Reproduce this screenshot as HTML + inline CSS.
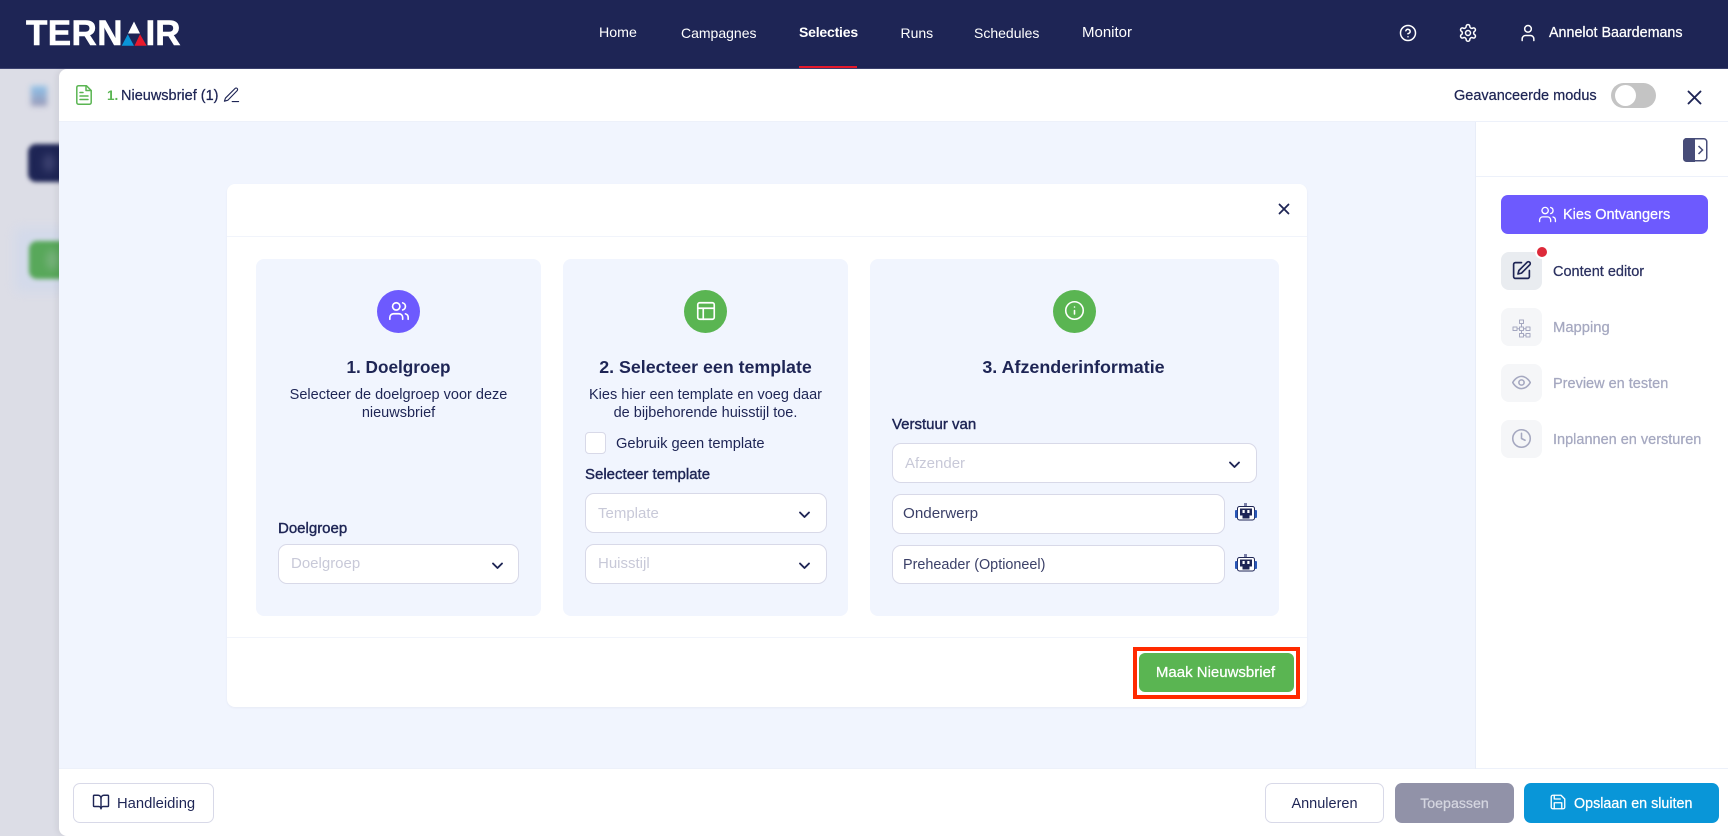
<!DOCTYPE html>
<html lang="nl"><head><meta charset="utf-8"><title>Ternair</title>
<style>
*{box-sizing:border-box}
html,body{margin:0;padding:0;width:1728px;height:836px;overflow:hidden;background:#dcdde6;font-family:"Liberation Sans",sans-serif;color:#1e2555}
div,span,svg{position:absolute}
.t{white-space:nowrap;line-height:20px;height:20px;font-size:15px}
.m{-webkit-text-stroke:.25px currentColor}
.l{-webkit-text-stroke:.4px currentColor}
.b{font-weight:bold}
.c{text-align:center}
.card{background:#f1f5fe;border-radius:8px;top:259px;height:357px}
.circ{width:43px;height:43px;border-radius:50%;top:290px}
.sel{background:#fff;border:1px solid #d8d9e8;border-radius:9px}
.ph{color:#c8c9d8;font-size:15px}
.ic{fill:none;stroke-linecap:round;stroke-linejoin:round}
.box{left:1501px;width:41px;height:38px;border-radius:8px;background:#f5f6f8}
.btn{top:783px;height:40px;border-radius:7px}
</style></head><body>
<!-- blurred background -->
<div style="left:31px;top:86px;width:16px;height:20px;background:linear-gradient(#8cc0e8,#9a9ab8);filter:blur(3px)"></div>
<div style="left:15px;top:228px;width:60px;height:64px;background:#c8d6f0;opacity:.45;filter:blur(6px)"></div>
<div style="left:28px;top:144px;width:50px;height:38px;background:#1e2555;border-radius:8px;filter:blur(2px)"></div>
<div style="left:29px;top:241px;width:50px;height:38px;background:#58a85a;border-radius:8px;filter:blur(2px)"></div>
<div style="left:43px;top:154px;width:12px;height:18px;background:#3c4170;border-radius:50%;filter:blur(4px)"></div>
<div style="left:46px;top:250px;width:13px;height:20px;background:#74b078;border-radius:50%;filter:blur(4px)"></div>

<!-- header -->
<div style="left:0;top:0;width:1728px;height:69px;background:#1e2555;border-bottom:1px solid #3d4370"></div>
<div class="t b" style="left:26px;top:14px;font-size:35px;line-height:40px;height:40px;color:#fff;-webkit-text-stroke:.6px #fff;letter-spacing:.4px">TERN</div>
<svg style="left:120px;top:20px" width="28" height="27" viewBox="120 20 28 27"><path d="M134 21.500L140 33.500H128Z" fill="#fff"/><path d="M127.800 34.300L121.700 45.700H134Z" fill="#0a95d8"/><path d="M140 34.300L134.500 45.700H146.700Z" fill="#e8192c"/></svg>
<div class="t b" style="left:145.500px;top:14px;font-size:35px;line-height:40px;height:40px;color:#fff;-webkit-text-stroke:.6px #fff">IR</div>

<div class="t" style="left:599px;top:23px;color:#fff;font-size:14.200px">Home</div>
<div class="t" style="left:681px;top:23px;color:#fff;font-size:14px">Campagnes</div>
<div class="t b" style="left:799px;top:22px;color:#fff;font-size:14px;letter-spacing:-.2px">Selecties</div>
<div class="t" style="left:900.500px;top:23px;color:#fff;font-size:14px">Runs</div>
<div class="t" style="left:974px;top:23px;color:#fff;font-size:14px">Schedules</div>
<div class="t" style="left:1082px;top:23px;color:#fff">Monitor</div>
<div style="left:799px;top:66px;width:58px;height:2px;background:#e8192c"></div>

<svg class="ic" style="left:1399px;top:24px" width="18" height="18" viewBox="0 0 24 24" stroke="#fff" stroke-width="2"><circle cx="12" cy="12" r="10"/><path d="M9.100 9a3 3 0 0 1 5.800 1c0 2-3 3-3 3"/><path d="M12 17h.01"/></svg>
<svg class="ic" style="left:1458px;top:23px" width="20" height="20" viewBox="0 0 24 24" stroke="#fff" stroke-width="1.800"><path d="M12.200 2h-.4a2 2 0 0 0-2 2v.2a2 2 0 0 1-1 1.700l-.4.3a2 2 0 0 1-2 0l-.2-.1a2 2 0 0 0-2.700.7l-.2.4a2 2 0 0 0 .7 2.700l.2.1a2 2 0 0 1 1 1.700v.5a2 2 0 0 1-1 1.700l-.2.1a2 2 0 0 0-.7 2.700l.2.4a2 2 0 0 0 2.700.7l.2-.1a2 2 0 0 1 2 0l.4.3a2 2 0 0 1 1 1.700v.2a2 2 0 0 0 2 2h.4a2 2 0 0 0 2-2v-.2a2 2 0 0 1 1-1.700l.4-.3a2 2 0 0 1 2 0l.2.1a2 2 0 0 0 2.700-.7l.2-.4a2 2 0 0 0-.7-2.700l-.2-.1a2 2 0 0 1-1-1.700v-.5a2 2 0 0 1 1-1.700l.2-.1a2 2 0 0 0 .7-2.700l-.2-.4a2 2 0 0 0-2.700-.7l-.2.1a2 2 0 0 1-2 0l-.4-.3a2 2 0 0 1-1-1.700V4a2 2 0 0 0-2-2z"/><circle cx="12" cy="12" r="3"/></svg>
<svg class="ic" style="left:1518px;top:23px" width="20" height="20" viewBox="0 0 24 24" stroke="#fff" stroke-width="1.800"><circle cx="12" cy="7" r="4"/><path d="M5 21v-2a4 4 0 0 1 4-4h6a4 4 0 0 1 4 4v2"/></svg>
<div class="t m" style="left:1549px;top:23px;color:#fff;font-size:14.300px">Annelot Baardemans</div>

<!-- modal -->
<div style="left:59px;top:69px;width:1669px;height:767px;background:#fff;border-radius:8px 0 0 8px;box-shadow:-3px 0 6px rgba(0,0,0,.05)"></div>
<div style="left:59px;top:122px;width:1417px;height:647px;background:#f1f5fe"></div>
<div style="left:59px;top:121px;width:1669px;height:1px;background:#edf1fa"></div>
<div style="left:59px;top:768px;width:1669px;height:1px;background:#edf1fa"></div>
<div style="left:1475px;top:122px;width:1px;height:647px;background:#e8edf8"></div>
<div style="left:1476px;top:176px;width:252px;height:1px;background:#edf1fa"></div>

<svg class="ic" style="left:76px;top:85px" width="16" height="20" viewBox="0 0 16 20" stroke="#5ab552" stroke-width="1.500"><path d="M10.500 .8H2.500A1.800 1.800 0 0 0 .8 2.500V17.500A1.800 1.800 0 0 0 2.500 19.200H13.500A1.800 1.800 0 0 0 15.200 17.500V5.500Z"/><path d="M10 1V5.500H15"/><path d="M4 7.500H7M4 11H12M4 14.500H12"/></svg>
<div class="t b" style="left:107px;top:86px;color:#5ab552;font-size:13.500px">1.</div>
<div class="t m" style="left:121px;top:86px;font-size:14.500px">Nieuwsbrief (1)</div>
<svg class="ic" style="left:223px;top:86px" width="17" height="17" viewBox="0 0 24 24" stroke="#1e2555" stroke-width="1.600"><path d="M13 22h9"/><path d="M17 3.500a2.100 2.100 0 0 1 3 3L7 20l-5 1.500L3.500 17z"/></svg>

<div class="t m" style="left:1454px;top:86px;font-size:14.500px">Geavanceerde modus</div>
<div style="left:1611px;top:83px;width:45px;height:25px;border-radius:13px;background:#c4c4c4"></div>
<div style="left:1615px;top:85px;width:21px;height:21px;border-radius:50%;background:#fff"></div>
<svg class="ic" style="left:1686px;top:89px" width="17" height="17" viewBox="0 0 17 17" stroke="#1e2555" stroke-width="1.900"><path d="M2.500 2.500l12 12M14.500 2.500l-12 12"/></svg>

<!-- right panel -->
<svg style="left:1683px;top:138px" width="25" height="24" viewBox="0 0 25 24"><rect x=".75" y=".75" width="23" height="22" rx="3" fill="#fff" stroke="#474c78" stroke-width="1.500"/><path d="M3.500 0H12V24H3.500A3.500 3.500 0 0 1 0 20.500V3.500A3.500 3.500 0 0 1 3.500 0Z" fill="#474c78"/><path d="M15.500 8l4 4-4 4" fill="none" stroke="#474c78" stroke-width="1.500"/></svg>
<div style="left:1501px;top:195px;width:207px;height:39px;border-radius:7px;background:#6d5afe"></div>
<svg class="ic" style="left:1538px;top:205px" width="19" height="19" viewBox="0 0 24 24" stroke="#fff" stroke-width="1.700"><path d="M16 21v-2a4 4 0 0 0-4-4H6a4 4 0 0 0-4 4v2"/><circle cx="9" cy="7" r="4"/><path d="M22 21v-2a4 4 0 0 0-3-3.870M16 3.130a4 4 0 0 1 0 7.750"/></svg>
<div class="t m" style="left:1563px;top:205px;color:#fff;font-size:14.500px">Kies Ontvangers</div>

<div class="box" style="top:252px;background:#e9ecf0"></div>
<svg class="ic" style="left:1511px;top:260px" width="21" height="21" viewBox="0 0 24 24" stroke="#1e2555" stroke-width="1.900"><path d="M12 3H5a2 2 0 0 0-2 2v14a2 2 0 0 0 2 2h14a2 2 0 0 0 2-2v-7"/><path d="M18.400 2.600a2.100 2.100 0 0 1 3 3L12 15l-4 1 1-4z"/></svg>
<div style="left:1535px;top:245px;width:14px;height:14px;border-radius:50%;background:#dd2a3a;border:2px solid #fff"></div>
<div class="t m" style="left:1553px;top:262px;color:#2b3160;font-size:14.500px">Content editor</div>

<div class="box" style="top:308px"></div>
<svg class="ic" style="left:1512px;top:319px" width="19" height="19" viewBox="0 0 19 19" stroke="#a5a8c0" stroke-width="1"><rect x="7.500" y="1" width="4" height="3.500"/><rect x="1" y="8" width="4" height="3.500"/><rect x="7.500" y="8" width="4" height="3.500"/><rect x="14" y="8" width="4" height="3.500"/><rect x="7.500" y="14.500" width="4" height="3.500"/><rect x="14" y="14.500" width="4" height="3.500"/><path d="M9.500 4.500V8M5 9.750h2.500M11.500 9.750H14M9.500 11.500v3M11.500 16.250H14"/></svg>
<div class="t m" style="left:1553px;top:318px;color:#a5a8c0;font-size:14.800px">Mapping</div>

<div class="box" style="top:364px"></div>
<svg class="ic" style="left:1511px;top:372px" width="21" height="21" viewBox="0 0 24 24" stroke="#a5a8c0" stroke-width="1.800"><path d="M2 12s3.500-7 10-7 10 7 10 7-3.500 7-10 7-10-7-10-7z"/><circle cx="12" cy="12" r="3"/></svg>
<div class="t m" style="left:1553px;top:374px;color:#a5a8c0;font-size:14.500px">Preview en testen</div>

<div class="box" style="top:420px"></div>
<svg class="ic" style="left:1511px;top:428px" width="21" height="21" viewBox="0 0 24 24" stroke="#a5a8c0" stroke-width="1.800"><circle cx="12" cy="12" r="10"/><path d="M12 6v6l4 2"/></svg>
<div class="t m" style="left:1553px;top:430px;color:#a5a8c0;font-size:14.500px">Inplannen en versturen</div>

<!-- dialog -->
<div style="left:227px;top:184px;width:1080px;height:523px;background:#fff;border-radius:8px;box-shadow:0 1px 2px rgba(30,37,85,.05)"></div>
<div style="left:227px;top:236px;width:1080px;height:1px;background:#f1f4fb"></div>
<div style="left:227px;top:637px;width:1080px;height:1px;background:#f1f4fb"></div>
<svg class="ic" style="left:1278px;top:203px" width="12" height="12" viewBox="0 0 12 12" stroke="#1e2555" stroke-width="1.800"><path d="M1.500 1.500l9 9M10.500 1.500l-9 9"/></svg>

<!-- card 1 -->
<div class="card" style="left:256px;width:285px"></div>
<div class="circ" style="left:377px;background:#6d5afe"></div>
<svg class="ic" style="left:388px;top:300px" width="22" height="22" viewBox="0 0 24 24" stroke="#fff" stroke-width="1.800"><path d="M16 21v-2a4 4 0 0 0-4-4H6a4 4 0 0 0-4 4v2"/><circle cx="9" cy="7" r="4"/><path d="M22 21v-2a4 4 0 0 0-3-3.870M16 3.130a4 4 0 0 1 0 7.750"/></svg>
<div class="t b c" style="left:256px;width:285px;top:357px;font-size:17.200px">1. Doelgroep</div>
<div class="t c" style="left:256px;width:285px;top:385px;font-size:14.500px">Selecteer de doelgroep voor deze</div>
<div class="t c" style="left:256px;width:285px;top:403px;font-size:14.500px">nieuwsbrief</div>
<div class="t l" style="left:278px;top:519px;font-size:15px">Doelgroep</div>
<div class="sel" style="left:278px;top:544px;width:241px;height:40px"></div>
<div class="t ph" style="left:291px;top:554px">Doelgroep</div>
<svg class="ic chev" style="left:491px;top:561px" width="13" height="10" viewBox="0 0 13 10" stroke="#1e2555" stroke-width="1.900"><path d="M2 2.500l4.500 4.500 4.500-4.500"/></svg>

<!-- card 2 -->
<div class="card" style="left:563px;width:285px"></div>
<div class="circ" style="left:684px;background:#5ab552"></div>
<svg class="ic" style="left:695px;top:300px" width="22" height="22" viewBox="0 0 24 24" stroke="#fff" stroke-width="1.800"><rect x="3" y="3" width="18" height="18" rx="2"/><path d="M3 9h18M9 9v12"/></svg>
<div class="t b c" style="left:563px;width:285px;top:357px;font-size:17.800px">2. Selecteer een template</div>
<div class="t c" style="left:563px;width:285px;top:385px;font-size:14.500px">Kies hier een template en voeg daar</div>
<div class="t c" style="left:563px;width:285px;top:403px;font-size:14.500px">de bijbehorende huisstijl toe.</div>
<div style="left:585px;top:432px;width:21px;height:22px;border:1px solid #d8d9e8;border-radius:4px;background:#fff"></div>
<div class="t" style="left:616px;top:434px;font-size:14.700px">Gebruik geen template</div>
<div class="t l" style="left:585px;top:465px;font-size:15px">Selecteer template</div>
<div class="sel" style="left:585px;top:493px;width:242px;height:40px"></div>
<div class="t ph" style="left:598px;top:504px">Template</div>
<svg class="ic chev" style="left:798px;top:510px" width="13" height="10" viewBox="0 0 13 10" stroke="#1e2555" stroke-width="1.900"><path d="M2 2.500l4.500 4.500 4.500-4.500"/></svg>
<div class="sel" style="left:585px;top:544px;width:242px;height:40px"></div>
<div class="t ph" style="left:598px;top:554px">Huisstijl</div>
<svg class="ic chev" style="left:798px;top:561px" width="13" height="10" viewBox="0 0 13 10" stroke="#1e2555" stroke-width="1.900"><path d="M2 2.500l4.500 4.500 4.500-4.500"/></svg>

<!-- card 3 -->
<div class="card" style="left:870px;width:409px"></div>
<div class="circ" style="left:1053px;background:#5ab552"></div>
<svg class="ic" style="left:1064px;top:300px" width="21" height="21" viewBox="0 0 24 24" stroke="#fff" stroke-width="1.800"><circle cx="12" cy="12" r="10"/><path d="M12 16v-4M12 8h.01"/></svg>
<div class="t b c" style="left:869px;width:409px;top:357px;font-size:17.900px">3. Afzenderinformatie</div>
<div class="t l" style="left:892px;top:415px;font-size:15px">Verstuur van</div>
<div class="sel" style="left:892px;top:443px;width:365px;height:40px"></div>
<div class="t ph" style="left:905px;top:454px">Afzender</div>
<svg class="ic chev" style="left:1228px;top:460px" width="13" height="10" viewBox="0 0 13 10" stroke="#1e2555" stroke-width="1.900"><path d="M2 2.500l4.500 4.500 4.500-4.500"/></svg>
<div class="sel" style="left:892px;top:494px;width:333px;height:40px"></div>
<div class="t" style="left:903px;top:504px;color:#3b4068;font-size:15.200px">Onderwerp</div>
<div class="sel" style="left:892px;top:545px;width:333px;height:39px"></div>
<div class="t" style="left:903px;top:555px;color:#3b4068;font-size:14.400px">Preheader (Optioneel)</div>
<svg style="left:1235px;top:502px" width="22" height="20" viewBox="0 0 22 20"><rect x="9" y="1" width="3" height="3.500" fill="#7b80a8"/><rect x="2.500" y="4.500" width="17" height="13.500" rx="2" fill="#fff" stroke="#1e2555" stroke-width="1"/><rect x="0" y="8" width="2.500" height="8" rx="1" fill="#2a58b8"/><rect x="19.500" y="8" width="2.500" height="8" rx="1" fill="#2a58b8"/><path d="M5 6.500h12v7h-2.500v3h-7v-3H5z" fill="#1e2555"/><rect x="7.500" y="8" width="2.200" height="3" fill="#fff"/><rect x="12.300" y="8" width="2.200" height="3" fill="#fff"/></svg>
<svg style="left:1235px;top:553px" width="22" height="20" viewBox="0 0 22 20"><rect x="9" y="1" width="3" height="3.500" fill="#7b80a8"/><rect x="2.500" y="4.500" width="17" height="13.500" rx="2" fill="#fff" stroke="#1e2555" stroke-width="1"/><rect x="0" y="8" width="2.500" height="8" rx="1" fill="#2a58b8"/><rect x="19.500" y="8" width="2.500" height="8" rx="1" fill="#2a58b8"/><path d="M5 6.500h12v7h-2.500v3h-7v-3H5z" fill="#1e2555"/><rect x="7.500" y="8" width="2.200" height="3" fill="#fff"/><rect x="12.300" y="8" width="2.200" height="3" fill="#fff"/></svg>

<!-- Maak Nieuwsbrief -->
<div style="left:1133px;top:647px;width:167px;height:52px;border:4px solid #ff2a00;background:#fff"></div>
<div style="left:1139px;top:653px;width:155px;height:39px;border-radius:6px;background:#5ab552"></div>
<div class="t m c" style="left:1138px;width:155px;top:663px;color:#fff;font-size:15px">Maak Nieuwsbrief</div>

<!-- footer -->
<div class="btn" style="left:73px;width:141px;background:#fff;border:1px solid #d8d9e8"></div>
<svg class="ic" style="left:92px;top:793px" width="18" height="18" viewBox="0 0 24 24" stroke="#1e2555" stroke-width="1.900"><path d="M12 7v14"/><path d="M3 18a1 1 0 0 1-1-1V4a1 1 0 0 1 1-1h5a4 4 0 0 1 4 4 4 4 0 0 1 4-4h5a1 1 0 0 1 1 1v13a1 1 0 0 1-1 1h-6a3 3 0 0 0-3 3 3 3 0 0 0-3-3z"/></svg>
<div class="t" style="left:117px;top:794px;font-size:14.800px">Handleiding</div>

<div class="btn" style="left:1265px;width:119px;background:#fff;border:1px solid #d8d9e8"></div>
<div class="t c" style="left:1265px;width:119px;top:794px;font-size:14.500px">Annuleren</div>
<div class="btn" style="left:1395px;width:119px;background:#9192a8"></div>
<div class="t m c" style="left:1395px;width:119px;top:794px;font-size:14.200px;color:#d5d6e0">Toepassen</div>
<div class="btn" style="left:1524px;width:195px;background:#0996d8"></div>
<svg class="ic" style="left:1549px;top:793px" width="18" height="18" viewBox="0 0 24 24" stroke="#fff" stroke-width="1.800"><path d="M19 21H5a2 2 0 0 1-2-2V5a2 2 0 0 1 2-2h11l5 5v11a2 2 0 0 1-2 2z"/><path d="M17 21v-8H7v8M7 3v5h8"/></svg>
<div class="t m" style="left:1574px;top:794px;font-size:14.300px;color:#fff">Opslaan en sluiten</div>
</body></html>
